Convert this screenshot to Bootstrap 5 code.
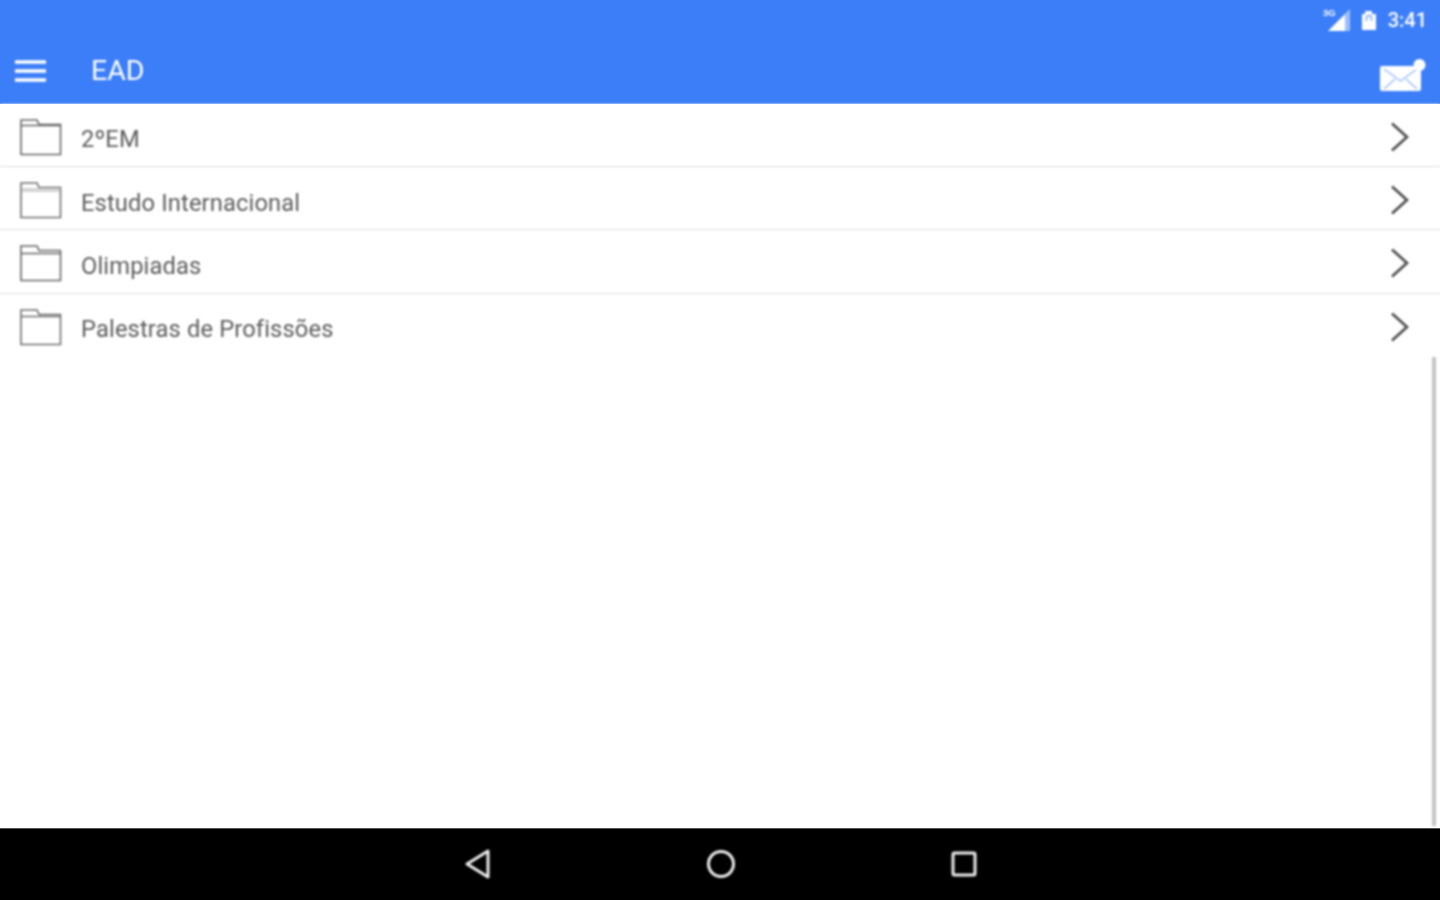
<!DOCTYPE html>
<html lang="pt">
<head>
<meta charset="utf-8">
<title>EAD</title>
<link href="https://cdn.jsdelivr.net/npm/bootstrap@5.3.0/dist/css/bootstrap.min.css" rel="stylesheet">
<style>
html,body{height:100%;overflow:hidden}
body{font-family:Roboto,"Liberation Sans",sans-serif;background:#fff}
.shell{height:900px}
.appbar{background:#3b7ef8;height:104px;color:#fff;position:relative}
.statusrow{height:40px;padding-right:13px;gap:10px;color:#fff}
.clock{font-size:20px;line-height:40px;font-weight:500;filter:blur(.8px)}
.toolrow{height:64px;padding-left:15px;padding-right:12px}
.apptitle{font-size:28.5px;font-weight:400;margin-left:45px;line-height:62px;height:62px;filter:blur(.8px)}
.mailbtn{margin-top:19px}
.list-group-flush>.entry{height:63px;border:0;border-bottom:2px solid #e9e9e9;border-radius:0;padding:3px 30px 0 19px;color:#5c5c5c;font-size:23.7px;letter-spacing:.14px;filter:blur(.8px)}
.list-group-flush>.entry-1{height:64px;padding-top:4px}
.list-group-flush>.entry-3{height:64px;padding-bottom:1px}
.list-group-flush>.entry-4{height:62px;padding-top:1px}
.entry-label{margin-left:18px;padding-top:7px}
.entry-1 .entry-label{padding-top:5px}
.entry-4 .entry-label{padding-top:6px}
.listzone{flex:1 1 auto;min-height:0;position:relative}
.rail{position:absolute;right:4px;top:253px;bottom:2px;width:4px;background:#c4c4c4;filter:blur(.8px)}
.sysbar{background:#000;height:72px;border-top:1px solid #555;position:relative}
.sysicon{position:absolute;top:18px}
.soft{filter:blur(.8px)}
.tiny{font-family:"Liberation Sans",sans-serif;font-size:9.5px;font-weight:700}
</style>
</head>
<body>
<div class="shell d-flex flex-column">
  <header class="appbar flex-shrink-0">
    <div class="statusrow d-flex justify-content-end align-items-center">
      <svg class="soft" width="30" height="26" viewBox="0 0 30 26">
        <path d="M8 24 L30 2 V24 Z" fill="#fff"/>
        <path d="M25 7 L30 2 V24 H25 Z" fill="#3b7ef8" fill-opacity=".5"/>
        <text class="tiny" x="3" y="8.500" fill="#fff">3G</text>
      </svg>
      <svg class="soft" width="18" height="24" viewBox="0 0 18 24">
        <path d="M2 6 H5 V3 H12 V6 H16 V22 H2 Z" fill="#fff"/>
        <path d="M6.500 13 V10 A2.300 2.300 0 0 1 11.500 10 V13" fill="none" stroke="#3b7ef8" stroke-opacity=".7" stroke-width="1.400"/>
      </svg>
      <span class="clock">3:41</span>
    </div>
    <div class="toolrow d-flex align-items-start">
      <svg class="soft" width="31" height="24" viewBox="0 0 31 24" style="margin-top:19px">
        <path d="M0 3H31M0 12H31M0 21H31" stroke="#fff" stroke-width="3.600"/>
      </svg>
      <span class="apptitle">EAD</span>
      <svg class="soft mailbtn ms-auto" width="48" height="34" viewBox="0 0 48 34">
        <rect x="0" y="7" width="41" height="25" rx="2" fill="#fff"/>
        <path d="M4 10 L20.500 22 L37 10 M4 30 L15 20 M37 30 L26 20" fill="none" stroke="#3b7ef8" stroke-opacity=".55" stroke-width="1.300"/>
        <circle cx="39.500" cy="6" r="6" fill="#fff"/>
      </svg>
    </div>
  </header>

  <main class="listzone">
    <div class="list-group list-group-flush">
      <a href="#" class="list-group-item entry entry-1 d-flex align-items-center">
        <svg width="44" height="38" viewBox="0 0 44 38"><path d="M2 36.500 H41.500 V6.500 H20 L18 2 H2 Z M2 7.500 H41.500" fill="#fff" stroke="#666" stroke-width="1.600"/></svg>
        <span class="entry-label">2ºEM</span>
        <svg class="ms-auto" width="20" height="30" viewBox="0 0 20 30"><path d="M2 1.500 L17 15 L2 28.500" fill="none" stroke="#4a4a4a" stroke-width="2.600"/></svg>
      </a>
      <a href="#" class="list-group-item entry d-flex align-items-center">
        <svg width="44" height="38" viewBox="0 0 44 38"><path d="M2 36.500 H41.500 V6.500 H20 L18 2 H2 Z" fill="#fff" stroke="#6e6e6e" stroke-width="1.600"/><rect x="3" y="7" width="38" height="4" fill="#d4d4d4"/></svg>
        <span class="entry-label">Estudo Internacional</span>
        <svg class="ms-auto" width="20" height="30" viewBox="0 0 20 30"><path d="M2 1.500 L17 15 L2 28.500" fill="none" stroke="#4a4a4a" stroke-width="2.600"/></svg>
      </a>
      <a href="#" class="list-group-item entry entry-3 d-flex align-items-center">
        <svg width="44" height="38" viewBox="0 0 44 38"><path d="M2 36.500 H41.500 V6.500 H20 L18 2 H2 Z M2 9.500 H41.500" fill="#fff" stroke="#666" stroke-width="1.600"/></svg>
        <span class="entry-label">Olimpiadas</span>
        <svg class="ms-auto" width="20" height="30" viewBox="0 0 20 30"><path d="M2 1.500 L17 15 L2 28.500" fill="none" stroke="#4a4a4a" stroke-width="2.600"/></svg>
      </a>
      <a href="#" class="list-group-item entry entry-4 d-flex align-items-center">
        <svg width="44" height="38" viewBox="0 0 44 38"><path d="M2 36.500 H41.500 V6.500 H20 L18 2 H2 Z M2 8.500 H41.500" fill="#fff" stroke="#6e6e6e" stroke-width="1.600"/></svg>
        <span class="entry-label">Palestras de Profissões</span>
        <svg class="ms-auto" width="20" height="30" viewBox="0 0 20 30"><path d="M2 1.500 L17 15 L2 28.500" fill="none" stroke="#4a4a4a" stroke-width="2.600"/></svg>
      </a>
    </div>
    <div class="rail"></div>
  </main>

  <footer class="sysbar flex-shrink-0">
    <svg class="sysicon soft" style="left:463px" width="30" height="34" viewBox="0 0 30 34"><path d="M25 4 V30 L4 17 Z" fill="none" stroke="#eee" stroke-width="3" stroke-linejoin="round"/></svg>
    <svg class="sysicon soft" style="left:705px" width="32" height="34" viewBox="0 0 32 34"><circle cx="16" cy="17" r="12.500" fill="none" stroke="#eee" stroke-width="3"/></svg>
    <svg class="sysicon soft" style="left:948px" width="32" height="34" viewBox="0 0 32 34"><rect x="5" y="6" width="22" height="22" rx="1.500" fill="none" stroke="#eee" stroke-width="3"/></svg>
  </footer>
</div>
<script src="https://cdn.jsdelivr.net/npm/bootstrap@5.3.0/dist/js/bootstrap.bundle.min.js"></script>
</body>
</html>
